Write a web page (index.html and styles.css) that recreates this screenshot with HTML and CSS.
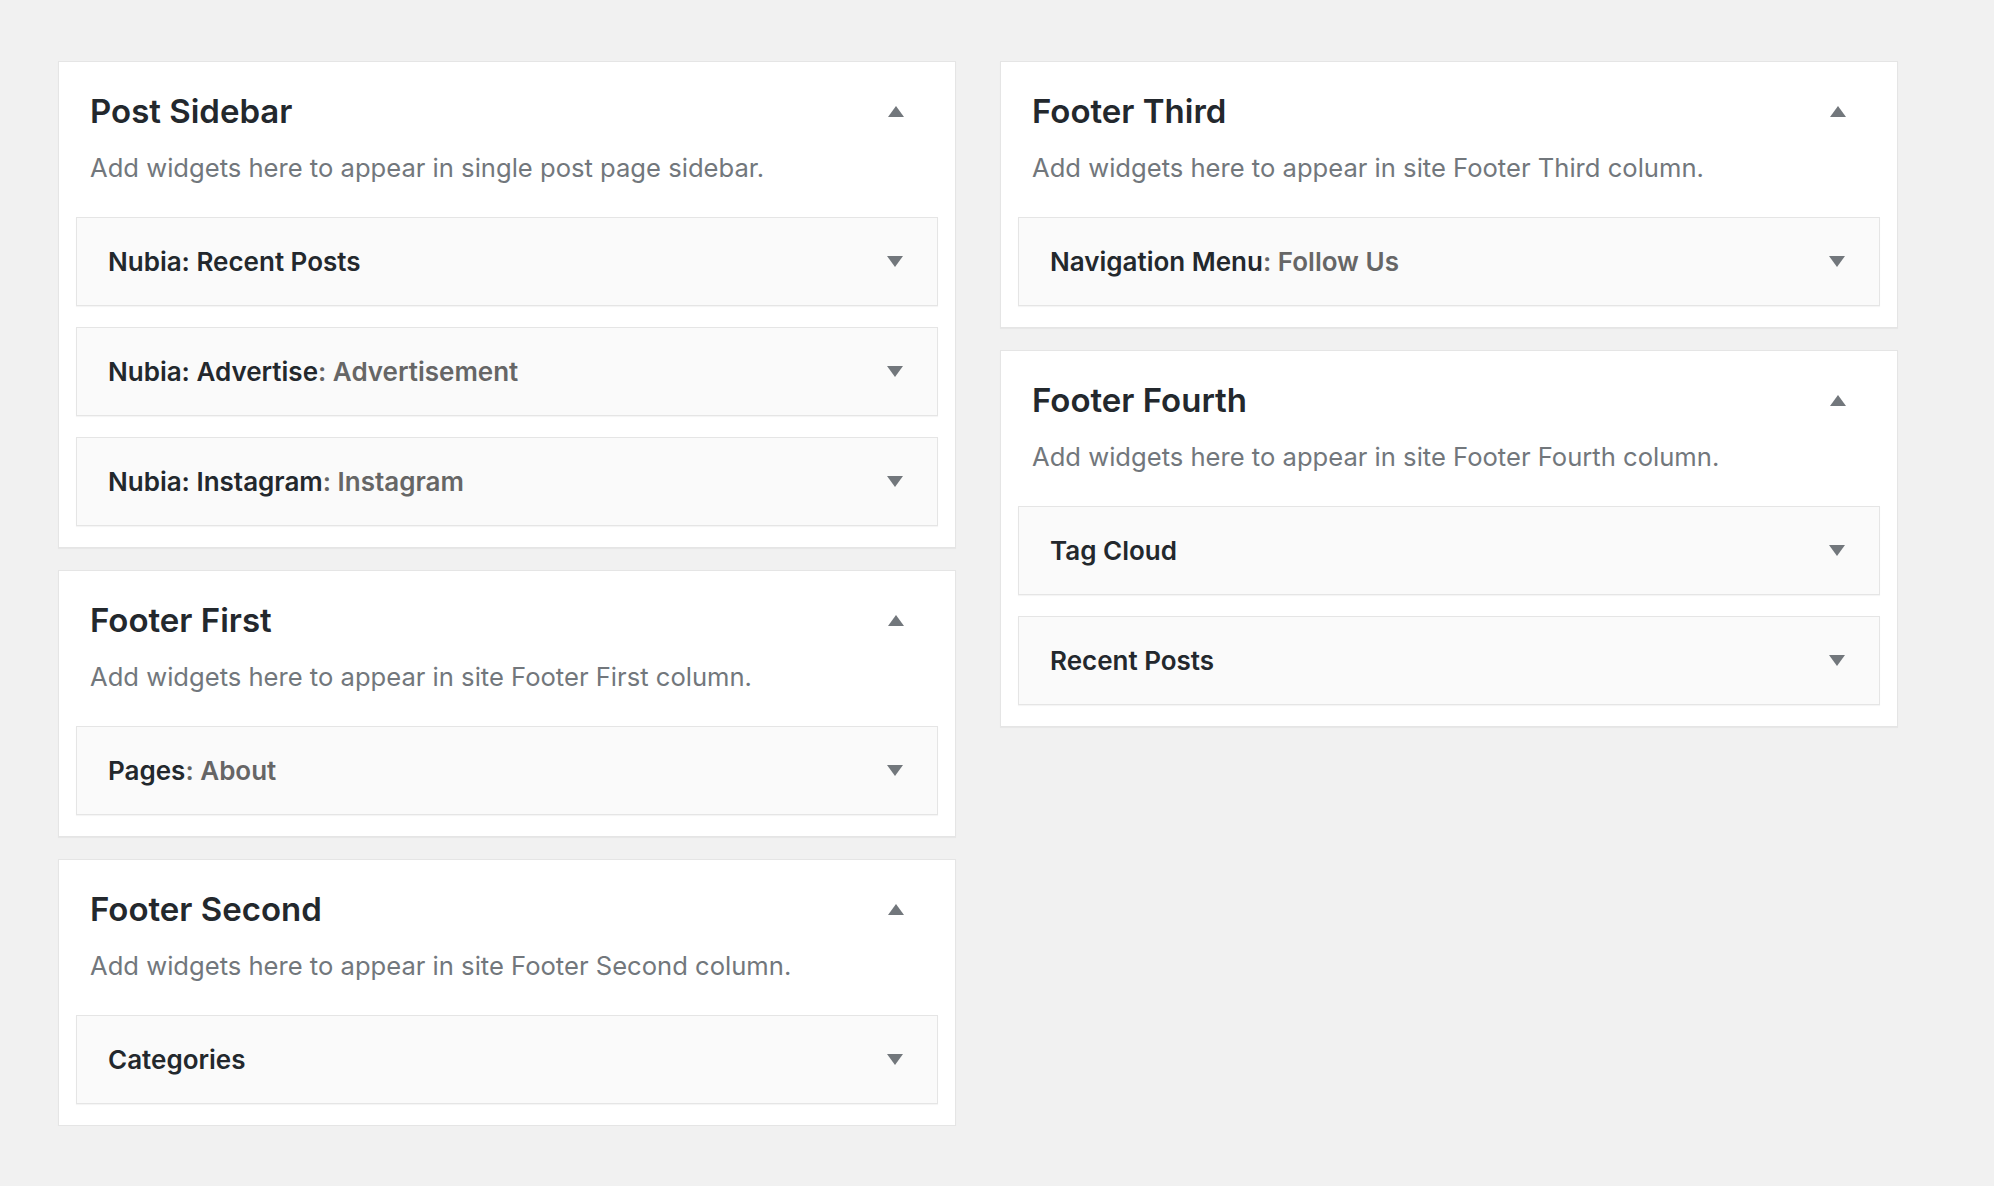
FILE: index.html
```html
<!DOCTYPE html>
<html lang="en">
<head>
<meta charset="utf-8">
<title>Widgets</title>
<link rel="stylesheet" href="styles.css">
</head>
<body>
<div class="areas">
  <div class="column">
    <section class="card">
      <div class="card-head"><h2>Post Sidebar</h2><span class="arrow up"></span></div>
      <p class="desc">Add widgets here to appear in single post page sidebar.</p>
      <div class="widgets">
        <div class="widget"><h3>Nubia: Recent Posts</h3><span class="arrow down"></span></div>
        <div class="widget"><h3>Nubia: Advertise<span class="in-title">: Advertisement</span></h3><span class="arrow down"></span></div>
        <div class="widget"><h3>Nubia: Instagram<span class="in-title">: Instagram</span></h3><span class="arrow down"></span></div>
      </div>
    </section>
    <section class="card">
      <div class="card-head"><h2>Footer First</h2><span class="arrow up"></span></div>
      <p class="desc">Add widgets here to appear in site Footer First column.</p>
      <div class="widgets">
        <div class="widget"><h3>Pages<span class="in-title">: About</span></h3><span class="arrow down"></span></div>
      </div>
    </section>
    <section class="card">
      <div class="card-head"><h2>Footer Second</h2><span class="arrow up"></span></div>
      <p class="desc">Add widgets here to appear in site Footer Second column.</p>
      <div class="widgets">
        <div class="widget"><h3>Categories</h3><span class="arrow down"></span></div>
      </div>
    </section>
  </div>
  <div class="column">
    <section class="card">
      <div class="card-head"><h2>Footer Third</h2><span class="arrow up"></span></div>
      <p class="desc">Add widgets here to appear in site Footer Third column.</p>
      <div class="widgets">
        <div class="widget"><h3>Navigation Menu<span class="in-title">: Follow Us</span></h3><span class="arrow down"></span></div>
      </div>
    </section>
    <section class="card">
      <div class="card-head"><h2>Footer Fourth</h2><span class="arrow up"></span></div>
      <p class="desc">Add widgets here to appear in site Footer Fourth column.</p>
      <div class="widgets">
        <div class="widget"><h3>Tag Cloud</h3><span class="arrow down"></span></div>
        <div class="widget"><h3>Recent Posts</h3><span class="arrow down"></span></div>
      </div>
    </section>
  </div>
</div>
</body>
</html>
```

FILE: styles.css
```css
* { box-sizing: border-box; }

html, body {
  margin: 0;
  background: #f1f1f1;
}

body {
  font-family: "Inter", "Liberation Sans", sans-serif;
  color: #23282d;
  padding: 61px 0 0 58px;
}

.areas {
  display: grid;
  grid-template-columns: 898px 898px;
  column-gap: 44px;
  align-items: start;
}

.column {
  display: flex;
  flex-direction: column;
  gap: 22px;
}

.card {
  background: #fff;
  border: 1px solid #e5e5e5;
  box-shadow: 0 1px 1px rgba(0, 0, 0, 0.04);
  padding: 29px 17px 21px;
}

.card-head {
  display: flex;
  align-items: center;
  justify-content: space-between;
  padding: 0 34px 0 14px;
}

.card-head h2 {
  margin: 0;
  font-size: 33px;
  line-height: 40px;
  font-weight: 600;
  color: #23282d;
}

.desc {
  margin: 22px 14px 34px;
  font-size: 25.6px;
  line-height: 30px;
  color: #72777c;
}

.widgets {
  display: flex;
  flex-direction: column;
  gap: 21px;
}

.widget {
  height: 89px;
  background: #fafafa;
  border: 1px solid #e5e5e5;
  box-shadow: 0 1px 1px rgba(0, 0, 0, 0.04);
  display: flex;
  align-items: center;
  justify-content: space-between;
  padding: 0 34px 0 31px;
}

.widget h3 {
  margin: 0;
  font-size: 26px;
  line-height: 32px;
  font-weight: 600;
  color: #23282d;
}

.in-title {
  color: #666;
}

.arrow {
  width: 0;
  height: 0;
  border-left: 8px solid transparent;
  border-right: 8px solid transparent;
}

.arrow.up {
  border-bottom: 11px solid #72777c;
}

.arrow.down {
  border-top: 11px solid #72777c;
}
```
